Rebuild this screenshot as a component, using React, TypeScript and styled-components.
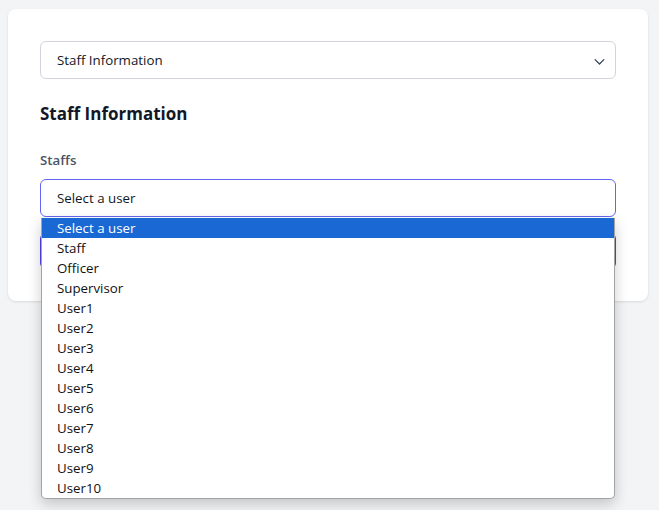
import styled, { createGlobalStyle } from "styled-components";

const GlobalStyle = createGlobalStyle`
    html, body {
        margin: 0;
        padding: 0;
        background: #f3f4f6;
        font-family: "Open Sans", "Noto Sans", sans-serif;
    }
    * {
        box-sizing: border-box;
    }
`;

const Page = styled.div`
    padding: 9px 11px 0 8px;
    min-height: 510px;
`;

const Card = styled.div`
    width: 640px;
    background: #ffffff;
    border-radius: 8px;
    box-shadow: 0 1px 3px rgba(0, 0, 0, 0.08), 0 1px 2px rgba(0, 0, 0, 0.04);
    padding: 32px;
`;

const SelectBox = styled.div<{ $focused?: boolean }>`
    position: relative;
    height: 38px;
    display: flex;
    align-items: center;
    padding: 0 16px;
    border: 1px solid ${props => (props.$focused ? "#6366f1" : "#d1d5db")};
    border-radius: 6px;
    background: #fff;
    font-size: 13.3px;
    color: #111827;
`;

const Chevron = styled.svg`
    position: absolute;
    right: 8px;
    top: 12px;
    width: 15px;
    height: 15px;
    color: #374151;
`;

const Title = styled.h2`
    margin: 21px 0 22px;
    font-size: 17px;
    line-height: 28px;
    font-weight: 700;
    color: #111827;
`;

const Label = styled.label`
    display: block;
    font-size: 13.3px;
    line-height: 20px;
    font-weight: 600;
    color: #4b5563;
    margin-bottom: 9px;
`;

const Field = styled.div`
    position: relative;
`;

const SubmitButton = styled.button`
    display: block;
    width: 100%;
    height: 36px;
    margin-top: 16px;
    border: none;
    border-radius: 6px;
    background: #4f46e5;
    color: #fff;
    font-family: inherit;
    font-size: 14px;
`;

const OptionList = styled.ul`
    position: absolute;
    left: 1px;
    right: 1px;
    top: 39px;
    margin: 0;
    padding: 0;
    list-style: none;
    background: #fff;
    border: 1px solid #a3a3a3;
    border-top: none;
    border-radius: 0 0 5px 5px;
    box-shadow: 0 5px 14px rgba(0, 0, 0, 0.2);
    overflow: hidden;
    z-index: 10;
`;

const Option = styled.li<{ $active?: boolean }>`
    height: 20px;
    line-height: 20px;
    padding-left: 15px;
    font-size: 13.3px;
    color: ${props => (props.$active ? "#ffffff" : "#111111")};
    background: ${props => (props.$active ? "#1a68d3" : "transparent")};
`;

const options = [
    "Select a user",
    "Staff",
    "Officer",
    "Supervisor",
    "User1",
    "User2",
    "User3",
    "User4",
    "User5",
    "User6",
    "User7",
    "User8",
    "User9",
    "User10",
];

function App() {
    return (
        <Page>
            <GlobalStyle />
            <Card>
                <SelectBox>
                    Staff Information
                    <Chevron viewBox="0 0 24 24" fill="none" stroke="currentColor" strokeWidth="2" strokeLinecap="round" strokeLinejoin="round">
                        <path d="M5 9l7 7 7-7" />
                    </Chevron>
                </SelectBox>
                <Title>Staff Information</Title>
                <Label>Staffs</Label>
                <Field>
                    <SelectBox $focused>Select a user</SelectBox>
                    <OptionList>
                        {options.map((opt, i) => (
                            <Option key={opt} $active={i === 0}>
                                {opt}
                            </Option>
                        ))}
                    </OptionList>
                </Field>
                <SubmitButton>Submit</SubmitButton>
            </Card>
        </Page>
    );
}

export default App;
